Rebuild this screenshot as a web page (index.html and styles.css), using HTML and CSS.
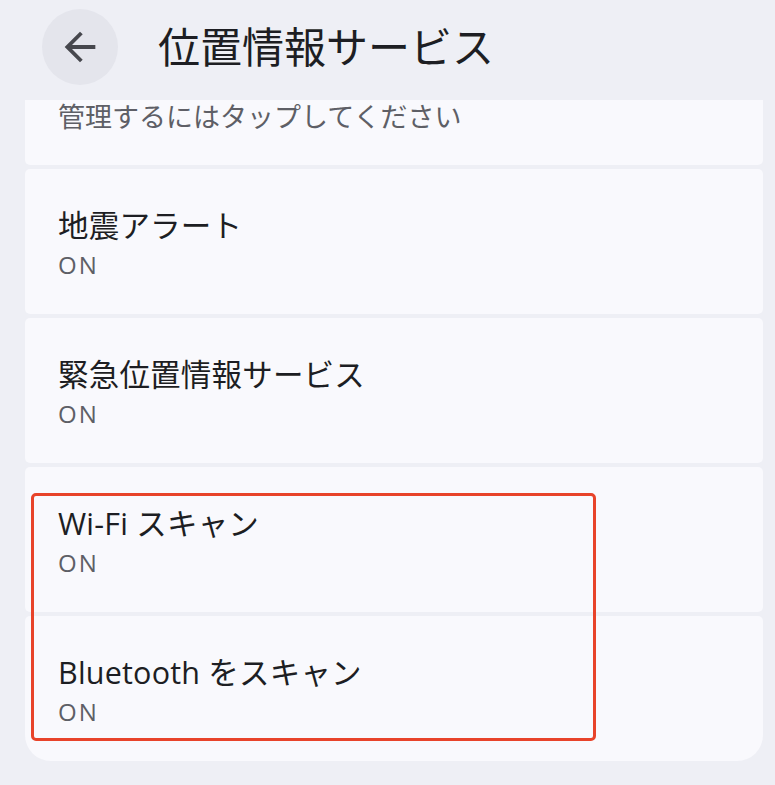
FILE: index.html
```html
<!DOCTYPE html>
<html lang="ja">
<head>
<meta charset="utf-8">
<link rel="stylesheet" href="styles.css">
</head>
<body>
<header class="topbar">
  <div class="back">
    <svg viewBox="0 0 24 24" width="46" height="46"><path d="M20 11H7.83l5.59-5.59L12 4l-8 8 8 8 1.41-1.41L7.83 13H20v-2z" fill="#46474d"/></svg>
  </div>
  <h1 class="title">位置情報サービス</h1>
</header>
<main class="list">
  <div class="card first"><div class="sub">管理するにはタップしてください</div></div>
  <div class="card"><div class="name">地震アラート</div><div class="state">ON</div></div>
  <div class="card"><div class="name">緊急位置情報サービス</div><div class="state">ON</div></div>
  <div class="card"><div class="name">Wi-Fi スキャン</div><div class="state">ON</div></div>
  <div class="card last"><div class="name">Bluetooth をスキャン</div><div class="state">ON</div></div>
</main>
<div class="highlight"></div>
</body>
</html>
```
FILE: styles.css
```css
html, body {
  margin: 0;
  padding: 0;
}
body {
  width: 775px;
  height: 785px;
  background: #eeeff5;
  font-family: "Open Sans", "Noto Sans CJK JP", sans-serif;
  position: relative;
  overflow: hidden;
}
.topbar {
  height: 100px;
  display: flex;
  align-items: center;
  padding-left: 42px;
  box-sizing: border-box;
}
.back {
  width: 76px;
  height: 76px;
  border-radius: 50%;
  background: #e4e5ec;
  display: flex;
  align-items: center;
  justify-content: center;
  margin-top: -6px;
}
.title {
  margin: -6px 0 0 40px;
  font-size: 42px;
  font-weight: 400;
  color: #1d1e23;
  line-height: 50px;
}
.list {
  margin: 0 12px 0 25px;
  display: flex;
  flex-direction: column;
  gap: 4px;
}
.card {
  background: #f9f9fd;
  height: 145px;
  border-radius: 5px;
  padding: 36px 0 0 33px;
  box-sizing: border-box;
}
.card.first {
  height: 65px;
  padding-top: 0;
  border-radius: 0 0 5px 5px;
}
.card.last {
  border-radius: 5px 5px 26px 26px;
}
.sub {
  font-size: 27px;
  line-height: 34px;
  color: #5e5f66;
}
.name {
  font-size: 30.5px;
  line-height: 40px;
  letter-spacing: 0.2px;
  color: #1d1e23;
}
.state {
  font-size: 24px;
  line-height: 40px;
  letter-spacing: 2px;
  color: #5e5f66;
}
.highlight {
  position: absolute;
  left: 31px;
  top: 493px;
  width: 565px;
  height: 248px;
  box-sizing: border-box;
  border: 3px solid #e8432a;
  border-radius: 5px;
}
```
